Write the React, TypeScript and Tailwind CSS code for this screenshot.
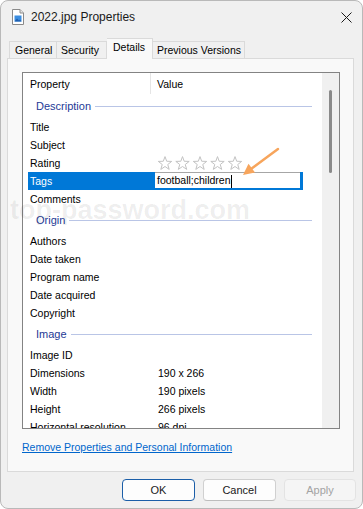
import React from "react";

const Star = ({ x }: { x: number }) => (
  <polygon
    transform={`translate(${x},0)`}
    points="7,0.6 8.7,5.25 13.7,5.4 9.76,8.5 11.2,13.4 7,10.5 2.8,13.4 4.24,8.5 0.3,5.4 5.3,5.25"
    fill="#ffffff"
    stroke="#c2c2c2"
    strokeWidth="1"
    strokeLinejoin="round"
  />
);

const Row = ({ label, value }: { label: string; value?: React.ReactNode }) => (
  <div className="h-[18px] flex items-center pl-[5px] pt-[1px] shrink-0">
    <div className="w-[127px] pl-[2px] whitespace-nowrap">{label}</div>
    <div className="pl-[3px] whitespace-nowrap flex items-center">{value}</div>
  </div>
);

const Group = ({ label }: { label: string }) => (
  <div className="h-[24px] flex items-center pl-[13px] pt-[1px] shrink-0">
    <span className="text-[#1e3a96] text-[11px]">{label}</span>
    <div className="flex-1 ml-[4px] mr-[10px] h-px bg-[#b9c5e6]" />
  </div>
);

export default function App() {
  return (
    <div className="relative w-[363px] h-[509px] bg-white font-['Liberation_Sans','Arial',sans-serif] text-[10.5px] text-black">
      <div className="w-full h-full rounded-[8px] border border-[#b9b9b9] bg-[#f0f0f0] flex flex-col overflow-hidden">
        {/* Title bar */}
        <div className="h-[32px] flex items-center pl-[11px] pr-[9px] shrink-0">
          <svg width="12" height="16" viewBox="0 0 12 16">
            <path d="M0.5 0.5 H8 L11.5 4 V15.5 H0.5 Z" fill="#ffffff" stroke="#8a8a8a" strokeWidth="1" />
            <path d="M8 0.5 V4 H11.5" fill="#e8e8e8" stroke="#8a8a8a" strokeWidth="1" />
            <rect x="2.5" y="6.5" width="7" height="6" fill="#3b8de0" />
            <path d="M2.5 12.5 L5 9.5 L7 11.5 L8 10.5 L9.5 12.5 Z" fill="#1f5fb0" />
          </svg>
          <span className="ml-[7px] text-[12px] leading-[14px] text-[#1a1a1a]">2022.jpg Properties</span>
          <div className="flex-1" />
          <svg width="11" height="11" viewBox="0 0 11 11" className="mr-[1px]">
            <path d="M0.5 0.5 L10.5 10.5 M10.5 0.5 L0.5 10.5" stroke="#1a1a1a" strokeWidth="1" />
          </svg>
        </div>

        {/* Tabs */}
        <div className="mt-[5px] h-[20px] flex items-end pl-[8px] shrink-0 whitespace-nowrap">
          <div className="h-[17px] w-[48px] pl-[5px] pt-[1px] flex items-center border border-b-0 border-[#dadada] bg-[#f0f0f0]">General</div>
          <div className="h-[17px] w-[50px] pl-[4px] pt-[1px] flex items-center border border-b-0 border-l-0 border-[#dadada] bg-[#f0f0f0]">Security</div>
          <div className="relative z-10 -mb-px h-[21px] w-[46px] pl-[6px] pb-[2px] flex items-center border border-b-0 border-l-0 border-[#dadada] bg-[#f9f9f9]">Details</div>
          <div className="h-[17px] w-[92px] pl-[4px] pt-[1px] flex items-center border border-b-0 border-l-0 border-[#dadada] bg-[#f0f0f0]">Previous Versions</div>
        </div>

        {/* Panel */}
        <div className="ml-[6px] mr-[8px] h-[414px] border border-[#dadada] bg-[#f9f9f9] pt-[13px] pl-[14px] pr-[13px] flex flex-col shrink-0">
          <div className="h-[357px] border border-[#838383] bg-white flex overflow-hidden shrink-0">
            <div className="flex-1 flex flex-col overflow-hidden">
              {/* header */}
              <div className="h-[21px] flex shrink-0">
                <div className="w-[128px] pl-[7px] pt-[2px] flex items-center border-r border-[#e5e5e5]">Property</div>
                <div className="pl-[6px] pt-[2px] flex items-center">Value</div>
              </div>
              <Group label="Description" />
              <Row label="Title" />
              <Row label="Subject" />
              <Row
                label="Rating"
                value={
                  <svg width="90" height="15" viewBox="0 0 90 15">
                    <Star x={0} />
                    <Star x={17.5} />
                    <Star x={35} />
                    <Star x={52.5} />
                    <Star x={70} />
                  </svg>
                }
              />
              {/* Tags row (selected, editing) */}
              <div className="h-[18px] ml-[5px] w-[275px] bg-[#0078d7] flex shrink-0">
                <div className="w-[127px] pl-[2px] pt-[1px] text-white flex items-center">Tags</div>
                <div className="w-[145px] h-[16px] bg-white border-t border-[#a6a6a6] flex items-center pl-[2px] pt-[1px]">
                  <span>football;children</span>
                  <span className="w-px h-[13px] bg-black" />
                </div>
              </div>
              <Row label="Comments" />
              <Group label="Origin" />
              <Row label="Authors" />
              <Row label="Date taken" />
              <Row label="Program name" />
              <Row label="Date acquired" />
              <Row label="Copyright" />
              <Group label="Image" />
              <Row label="Image ID" />
              <Row label="Dimensions" value="190 x 266" />
              <Row label="Width" value="190 pixels" />
              <Row label="Height" value="266 pixels" />
              <Row label="Horizontal resolution" value="96 dpi" />
            </div>
            {/* scrollbar */}
            <div className="w-[17px] bg-[#f0f0f0] flex justify-center pt-[17px] shrink-0">
              <div className="w-[3px] h-[83px] rounded-full bg-[#8a8a8a]" />
            </div>
          </div>
          <div className="mt-[12px] leading-[13px] text-[#0066cc] underline">Remove Properties and Personal Information</div>
        </div>

        {/* Buttons */}
        <div className="mt-[7px] flex justify-end gap-[8px] pr-[6px] shrink-0">
          <button className="w-[73px] h-[22px] rounded-[4px] border border-[#1b5ea8] bg-[#fdfdfd] text-[11px] text-[#1a1a1a]">OK</button>
          <button className="w-[73px] h-[22px] rounded-[4px] border border-[#d0d0d0] border-b-[#bdbdbd] bg-[#fdfdfd] text-[11px] text-[#1a1a1a]">Cancel</button>
          <button className="w-[72px] h-[22px] rounded-[4px] border border-[#e3e3e3] bg-[#f5f5f5] text-[11px] text-[#a3a3a3]">Apply</button>
        </div>
      </div>

      {/* watermark */}
      <div className="absolute left-[10px] top-[197px] pointer-events-none text-[27px] leading-[27px] font-bold text-black/[0.07] whitespace-nowrap">
        top-password.com
      </div>

      {/* annotation arrow */}
      <svg className="absolute left-0 top-0 pointer-events-none" width="363" height="509" viewBox="0 0 363 509">
        <line x1="278" y1="149" x2="251" y2="169" stroke="#f7a55c" strokeWidth="2.5" strokeLinecap="round" />
        <polygon points="243,175 255,172.5 248.5,163.8" fill="#f7a55c" />
      </svg>
    </div>
  );
}
